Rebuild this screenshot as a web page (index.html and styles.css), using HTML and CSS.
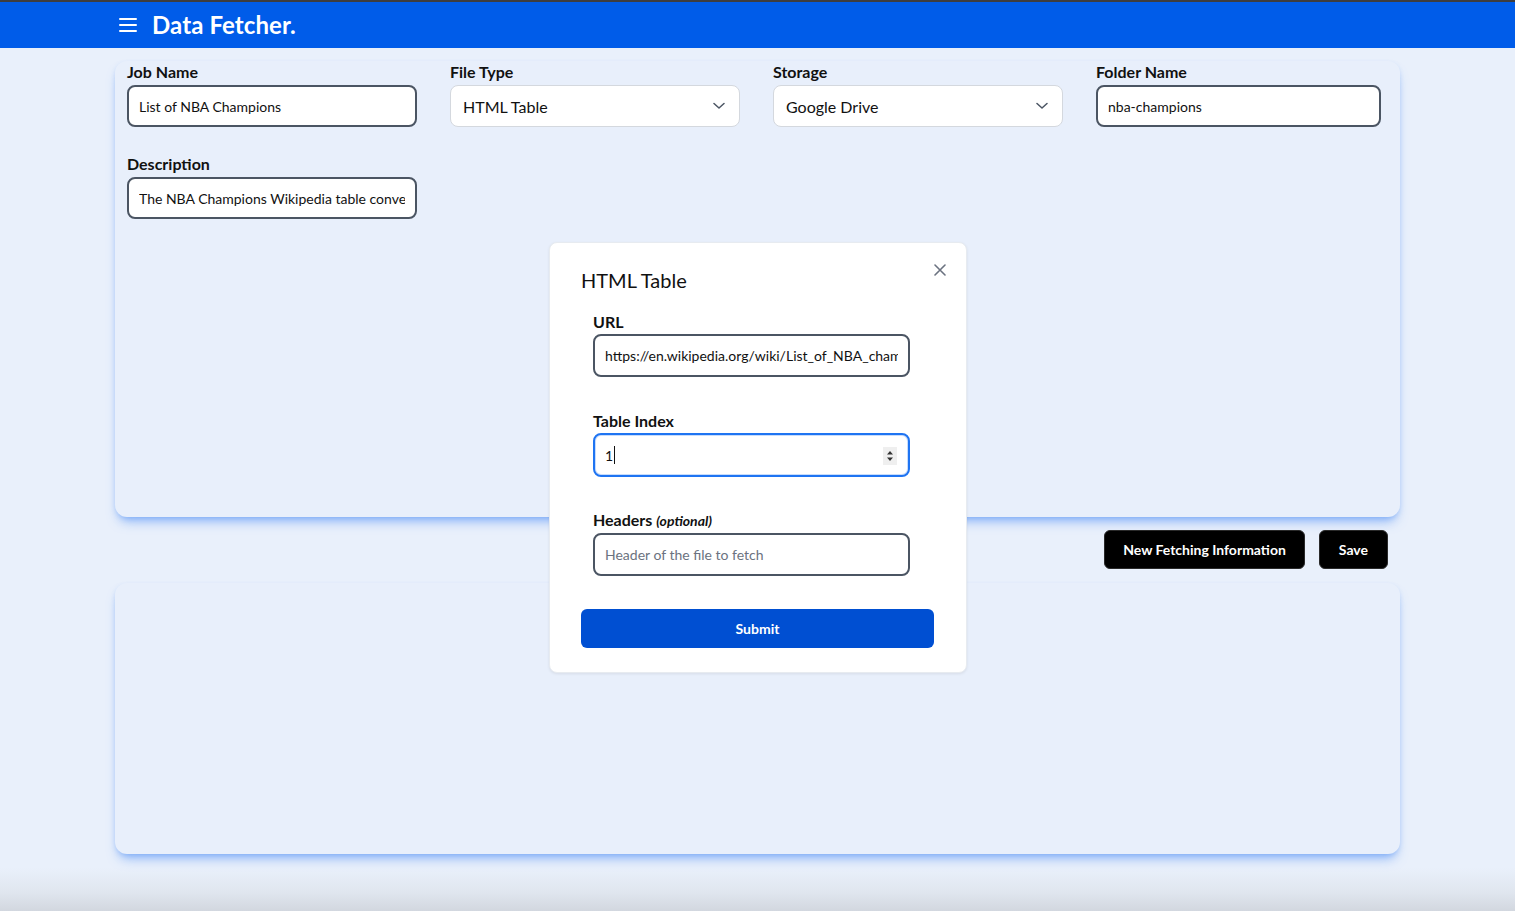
FILE: index.html
```html
<!DOCTYPE html>
<html lang="en">
<head>
<meta charset="utf-8">
<title>Data Fetcher.</title>
<link rel="stylesheet" href="styles.css">
</head>
<body>
<header class="topbar">
  <svg class="burger" width="18" height="14" viewBox="0 0 18 14" aria-hidden="true">
    <rect x="0" y="0" width="18" height="2" rx="1" fill="#fff"/>
    <rect x="0" y="6" width="18" height="2" rx="1" fill="#fff"/>
    <rect x="0" y="12" width="18" height="2" rx="1" fill="#fff"/>
  </svg>
  <span class="brand">Data Fetcher.</span>
</header>

<main class="main">
  <section class="card card-form">
    <div class="grid">
      <div class="field">
        <label class="label">Job Name</label>
        <input class="input" type="text" value="List of NBA Champions">
      </div>
      <div class="field">
        <label class="label">File Type</label>
        <div class="select"><span>HTML Table</span>
          <svg width="12" height="8" viewBox="0 0 12 8"><path d="M1 1.5 L6 6 L11 1.5" fill="none" stroke="#4b5563" stroke-width="1.5" stroke-linecap="round" stroke-linejoin="round"/></svg>
        </div>
      </div>
      <div class="field">
        <label class="label">Storage</label>
        <div class="select"><span>Google Drive</span>
          <svg width="12" height="8" viewBox="0 0 12 8"><path d="M1 1.5 L6 6 L11 1.5" fill="none" stroke="#4b5563" stroke-width="1.5" stroke-linecap="round" stroke-linejoin="round"/></svg>
        </div>
      </div>
      <div class="field field-last">
        <label class="label">Folder Name</label>
        <input class="input" type="text" value="nba-champions">
      </div>
      <div class="field">
        <label class="label">Description</label>
        <input class="input" type="text" value="The NBA Champions Wikipedia table converted">
      </div>
    </div>
  </section>

  <div class="actions">
    <button class="btn-dark">New Fetching Information</button>
    <button class="btn-dark">Save</button>
  </div>

  <section class="card card-list"></section>
</main>

<div class="modal">
  <div class="modal-head">
    <h2 class="modal-title">HTML Table</h2>
    <svg class="close" width="12" height="12" viewBox="0 0 12 12" aria-hidden="true"><path d="M1 1 L11 11 M11 1 L1 11" stroke="#6b7280" stroke-width="1.6" stroke-linecap="round"/></svg>
  </div>
  <div class="mgroup">
    <label class="label">URL</label>
    <input class="input minput" type="text" value="https://en.wikipedia.org/wiki/List_of_NBA_champions">
  </div>
  <div class="mgroup gap-lg">
    <label class="label">Table Index</label>
    <div class="focus-wrap">
      <span class="num-val">1</span><span class="caret"></span>
      <span class="spinner">
        <svg width="8" height="12" viewBox="0 0 8 12"><path d="M4 1 L7 4.5 L1 4.5 Z M4 11 L7 7.5 L1 7.5 Z" fill="#333"/></svg>
      </span>
    </div>
  </div>
  <div class="mgroup gap-sm">
    <label class="label">Headers <em class="opt">(optional)</em></label>
    <input class="input minput" type="text" placeholder="Header of the file to fetch">
  </div>
  <button class="submit">Submit</button>
</div>
</body>
</html>
```
FILE: styles.css
```css
* { box-sizing: border-box; }
html, body { margin: 0; padding: 0; }
body {
  font-family: Lato, "Noto Sans", sans-serif;
  color: #111;
  min-height: 911px;
  background: linear-gradient(to bottom, #e9f0fb 0, #e9f0fb 868px, #e0e6ef 892px, #d2d7df 911px);
  position: relative;
}
.topbar {
  height: 48px;
  background: #005ce9;
  border-top: 2px solid #3d3d40;
  display: flex;
  align-items: center;
  padding-left: 119px;
  gap: 15px;
}
.burger { display: block; margin-top: 0; }
.brand {
  color: #fff;
  font-weight: 700;
  font-size: 24px;
  letter-spacing: 0.1px;
  margin-top: -2px;
}
.main { padding: 13px 115px 0; }
.card {
  background: #e8effb;
  border-radius: 12px;
  box-shadow: 0 8px 12px -4px rgba(59, 130, 246, 0.55), 0 2px 5px -1px rgba(59, 130, 246, 0.25);
}
.card-form { height: 456px; padding: 1px 20px 0 12px; }
.grid {
  display: grid;
  grid-template-columns: repeat(4, 290px);
  column-gap: 33px;
  row-gap: 27px;
}
.field-last { width: 285px; }
.label {
  display: block;
  font-size: 16px;
  font-weight: 700;
  line-height: 20px;
  margin-bottom: 3px;
  color: #111;
}
.input {
  display: block;
  width: 100%;
  height: 42px;
  border: 2px solid #4b5563;
  border-radius: 8px;
  background: #fff;
  padding: 0 10px;
  font-family: Lato, "Noto Sans", sans-serif;
  font-size: 14px;
  color: #111;
  outline: none;
}
.input::placeholder { color: #6b7280; }
.select {
  height: 42px;
  border: 1px solid #d4d8de;
  border-radius: 8px;
  background: #fff;
  display: flex;
  align-items: center;
  justify-content: space-between;
  padding: 0 14px 0 12px;
  font-size: 16px;
  color: #111;
}
.actions {
  display: flex;
  justify-content: flex-end;
  gap: 14px;
  padding-right: 12px;
  margin-top: 13px;
}
.btn-dark {
  height: 39px;
  background: #000;
  color: #fff;
  border: 1px solid #2a2a2a;
  border-radius: 6px;
  padding: 0 18px;
  font-family: Lato, "Noto Sans", sans-serif;
  font-weight: 700;
  font-size: 14px;
}
.btn-dark + .btn-dark { padding: 0 19px; }
.card-list { height: 271px; margin-top: 14px; }

.modal {
  position: absolute;
  left: 549px;
  top: 242px;
  width: 418px;
  background: #fff;
  border-radius: 8px;
  border: 1px solid #e7ebf0;
  box-shadow: 0 1px 3px rgba(0, 0, 0, 0.08);
  padding: 23px 32px 24px 31px;
}
.modal-head { position: relative; }
.modal-title {
  margin: 0;
  font-size: 20px;
  font-weight: 400;
  line-height: 28px;
  color: #111;
}
.close { position: absolute; right: -12px; top: -2px; }
.mgroup { margin: 18px 0 0 12px; width: 317px; }
.mgroup .label { margin-bottom: 2px; }
.gap-lg { margin-top: 34px; }
.gap-sm { margin-top: 33px; }
.minput { height: 43px; }
.opt { font-size: 14px; font-style: italic; font-weight: 700; }
.focus-wrap {
  position: relative;
  height: 44px;
  border: 2px solid #1f74f2;
  border-radius: 8px;
  box-shadow: inset 0 0 0 1px rgba(31, 116, 242, 0.25);
  background: #fff;
  display: flex;
  align-items: center;
  padding: 0 10px;
  font-size: 14px;
}
.num-val { color: #111; }
.caret { display: inline-block; width: 1px; height: 18px; background: #111; margin-left: 1px; }
.spinner {
  position: absolute;
  right: 11px;
  top: 12px;
  width: 14px;
  height: 18px;
  background: #efefef;
  display: flex;
  align-items: center;
  justify-content: center;
}
.submit {
  display: block;
  width: 100%;
  height: 39px;
  margin-top: 33px;
  border: none;
  border-radius: 6px;
  background: #004fd2;
  color: #fff;
  font-family: Lato, "Noto Sans", sans-serif;
  font-weight: 700;
  font-size: 14px;
}
```
